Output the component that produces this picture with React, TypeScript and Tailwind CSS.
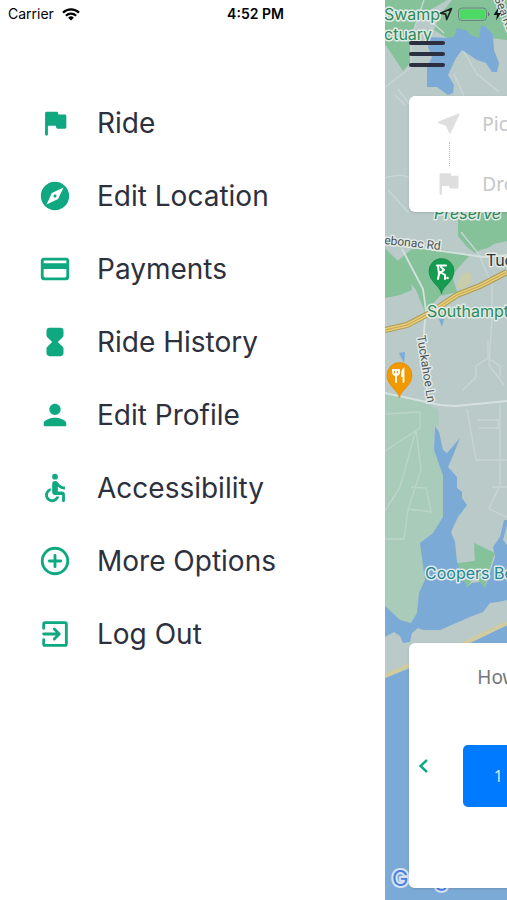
import React from 'react';

const BoxIcon = ({ children }: { children: React.ReactNode }) => (
  <svg viewBox="0 0 24 24" fill="currentColor" className="h-[34px] w-[34px] shrink-0 text-[#10a880]" aria-hidden="true">
    {children}
  </svg>
);

const FLAG_PATH =
  'M14.4 6l-.24-1.2c-.09-.46-.5-.8-.98-.8H6c-.55 0-1 .45-1 1v15c0 .55.45 1 1 1s1-.45 1-1v-6h5.6l.24 1.2c.09.47.5.8.98.8H19c.55 0 1-.45 1-1V7c0-.55-.45-1-1-1h-4.6z';

const menu = [
  { label: 'Ride', icon: <path d={FLAG_PATH} /> },
  {
    label: 'Edit Location',
    icon: (
      <path d="M12 10.9c-.61 0-1.1.49-1.1 1.1s.49 1.1 1.1 1.1c.61 0 1.1-.49 1.1-1.1s-.49-1.1-1.1-1.1zM12 2C6.48 2 2 6.48 2 12s4.48 10 10 10 10-4.48 10-10S17.52 2 12 2zm2.19 12.19L6 18l3.81-8.19L18 6l-3.81 8.19z" />
    ),
  },
  {
    label: 'Payments',
    icon: (
      <path d="M20 4H4c-1.11 0-1.99.89-1.99 2L2 18c0 1.11.89 2 2 2h16c1.11 0 2-.89 2-2V6c0-1.11-.89-2-2-2zm-1 14H5c-.55 0-1-.45-1-1v-5h16v5c0 .55-.45 1-1 1zm1-10H4V6h16v2z" />
    ),
  },
  {
    label: 'Ride History',
    icon: (
      <path d="M6 4v3.17c0 .53.21 1.04.59 1.42L10 12l-3.42 3.42c-.37.38-.58.89-.58 1.42V20c0 1.1.9 2 2 2h8c1.1 0 2-.9 2-2v-3.16c0-.53-.21-1.04-.58-1.41L14 12l3.41-3.4c.38-.38.59-.89.59-1.42V4c0-1.1-.9-2-2-2H8c-1.1 0-2 .9-2 2z" />
    ),
  },
  {
    label: 'Edit Profile',
    icon: (
      <path d="M12 12c2.21 0 4-1.79 4-4s-1.79-4-4-4-4 1.79-4 4 1.79 4 4 4zm0 2c-2.67 0-8 1.34-8 4v1c0 .55.45 1 1 1h14c.55 0 1-.45 1-1v-1c0-2.66-5.33-4-8-4z" />
    ),
  },
  {
    label: 'Accessibility',
    icon: (
      <>
        <circle cx="12" cy="4" r="2" />
        <path d="M19 13v-2c-1.54.02-3.09-.75-4.07-1.83l-1.29-1.43c-.17-.19-.38-.34-.61-.45-.01 0-.01-.01-.02-.01H13c-.35-.2-.75-.3-1.19-.26C10.76 7.11 10 8.04 10 9.09V15c0 1.1.9 2 2 2h5v4c0 .55.45 1 1 1s1-.45 1-1v-4.5c0-1.1-.9-2-2-2h-3v-3.45c1.29 1.07 3.25 1.94 5 1.95zm-6.17 5c-.41 1.16-1.52 2-2.83 2-1.66 0-3-1.34-3-3 0-1.31.84-2.41 2-2.83V12.1c-2.28.46-4 2.48-4 4.9 0 2.76 2.24 5 5 5 2.42 0 4.44-1.72 4.9-4h-2.07z" />
      </>
    ),
  },
  {
    label: 'More Options',
    icon: (
      <g fill="none" stroke="currentColor" strokeWidth="2" strokeLinecap="round">
        <circle cx="12" cy="12" r="9" />
        <path d="M12 8v8M8 12h8" />
      </g>
    ),
  },
  {
    label: 'Log Out',
    icon: (
      <g fill="none" stroke="currentColor" strokeWidth="2" strokeLinecap="round" strokeLinejoin="round">
        <path d="M4 8V5c0-.55.45-1 1-1h14c.55 0 1 .45 1 1v14c0 .55-.45 1-1 1H5c-.55 0-1-.45-1-1v-3" />
        <path d="M4 12h11M11.5 8.5L15 12l-3.5 3.5" />
      </g>
    ),
  },
];

function StatusBar() {
  return (
    <header className="absolute inset-x-0 top-0 z-20 grid h-7 grid-cols-3 items-center pl-2 pr-1 text-black">
      <div className="flex items-center gap-1 text-sm">
        <span>Carrier</span>
        <svg viewBox="0 0 18 13" className="ml-1 h-[13px] w-[18px]" aria-hidden="true">
          <g fill="none" stroke="currentColor" strokeWidth="2.2">
            <path d="M1 4.6a11.3 11.3 0 0 1 16 0" />
            <path d="M3.9 7.7a7.2 7.2 0 0 1 10.2 0" />
          </g>
          <path d="M9 12.6L6.1 9.7a4.1 4.1 0 0 1 5.8 0z" fill="currentColor" />
        </svg>
      </div>
      <div className="text-center text-sm font-semibold">4:52 PM</div>
      <div className="flex items-center justify-end gap-1">
        <svg viewBox="0 0 14 14" className="h-3.5 w-3.5" aria-hidden="true">
          <path d="M12.5 1.5L1.5 6.2l5.2 1 1 5.3z" fill="none" stroke="#1b2523" strokeWidth="1.7" strokeLinejoin="round" />
        </svg>
        <svg viewBox="0 0 46 16" className="h-4 w-[46px]" aria-hidden="true">
          <rect x="1.5" y="2" width="28" height="12.5" rx="3.5" fill="none" stroke="#68857a" />
          <rect x="3" y="3.5" width="25" height="9.5" rx="2" fill="#4cd964" />
          <path d="M31 6v4.5c2-1 2-3.5 0-4.5z" fill="#5c736d" />
          <path d="M41.5 1.5l-5 7.5h3.5l-1 5.5 5-7.5h-3.5z" fill="#101816" />
        </svg>
      </div>
    </header>
  );
}

function MapBackground() {
  return (
    <svg
      viewBox="385 0 122 900"
      preserveAspectRatio="xMinYMin slice"
      className="absolute inset-0 h-full w-full"
      aria-hidden="true"
    >
      <rect x="385" width="900" height="900" fill="#b9cac8" />

      {/* parks */}
      <g fill="#85c29a">
        <path d="M385 0H447L430 10 418 20 410 40V63L403 71 385 44Z" />
        <path d="M452 0H507V40L490 38 478 39 455 39 447 38 434 30 440 15Z" />
        <path d="M458 205h49v36l-13 3-6 4-8 2-5 3-8-6-9-11z" />
        <path d="M385 248l15 15 11 18 1 9-12 5-15 3z" />
        <path d="M395 263L412 249H440L470 255 452 275 457 292 440 296 425 312 416 290Z" />
      </g>
      <path d="M385 393L420 400 438 410 439 425 434 427 434 450 444 475V517L434 534 421 543 426 580 420 593 417 614 411 624 400 621 385 607Z" fill="#a9cbba" />
      <path d="M462 275l5-4 5 4-1 7-8 8-6-3 2-8z" fill="#c9cda9" />

      {/* side roads */}
      <g fill="none" stroke="#c9d6d4" strokeWidth="1.3">
        <path d="M424 0l-13 38v30M385 87l28-21M391 9l-6 12M398 89l16 21M425 16l19 17M463 50l14 24 22 18M454 74l10 22" />
        <path d="M385 178q18-6 26 1M388 190l21 23M395 95l10 10M461 232l17 21 14 32v34l-3 46 15 20" />
        <path d="M476 377V366L488 358 500 366V377M488 340V358M476 377L463 390" />
        <path d="M467 409l9 51h31M500 404v81l-11 24 18 8M478 420h20v8h-19M492 487h15" />
        <path d="M445 668l30-14 32-18" />
      </g>
      <path
        d="M385 242l50 8 48 7 24-2M402 249l21 40 3 22-2 20 3 62M385 393l55 12 16 1 51-5"
        fill="none"
        stroke="#d6e1df"
        strokeWidth="1.8"
      />
      <g fill="none" stroke="#bbd6c9" strokeWidth="1.3">
        <path d="M385 414l35-2v16l-35 23M416 430l5 40-13 40-4 29h-19M416 430l-16 57-15 24M411 487l15 1 5 24-22-3" />
      </g>

      {/* water */}
      <g fill="#7caad6">
        <path d="M457 28L467 31 470 35 479 38 481 25 486 27 493 35 494 50 499 63 497 72H492L486 63 477 60 462 50 456 58 448 75 454 85 453 93 448 95 437 87H427V67L432 57 428 47 430 37 447 38 454 37Z" />
        <path d="M439 319h5l-2 8zM399 353l6-1-1 11z" />
        <path d="M435 426L439 432 443 450 447 453 460 438 452 458 448 467 457 477V488L462 492V498L467 505 458 517 451 532 455 542 457 562 460 567 467 587 472 583 480 582 485 588 495 557 493 547 500 537 504 520H507V600L498 602 490 603 483 612 470 617 440 630H423L418 628 412 633 410 642 403 643 400 636 394 632 385 637V606L400 620 411 623 417 613 419 593 425 580 420 543 433 533 443 517V475L434 450Z" />
        <path d="M385 678l25-10 60-25 37-18v275h-122z" />
      </g>
      <path d="M474 543L495 553 488 573 485 588 480 582 475 577 467 587 460 575 458 563 475 561Z" fill="#85c29a" />
      <path d="M385 676l25-11 53-21 44-21" fill="none" stroke="#d1cc9d" strokeWidth="4" />
      <path d="M507 525V545L503 540Z" fill="#b9cac8" />

      {/* highway */}
      <g fill="none">
        <path d="M385 330l22-5 23-12 27-18 23-9 27-14" stroke="#a99b55" strokeWidth="6" />
        <path d="M385 330l22-5 23-12 27-18 23-9 27-14" stroke="#e8cd78" strokeWidth="4" />
        <path d="M385 330l22-5 23-12 27-18 23-9 27-14" stroke="#c1a755" strokeWidth="1" />
      </g>

      {/* place names */}
      <g
        className="font-['Inter',sans-serif]"
        stroke="#e1eae7"
        strokeWidth="3"
        strokeLinejoin="round"
        paintOrder="stroke"
        fontSize="16"
        fill="#2e8b57"
      >
        <text x="384" y="20">Swamp</text>
        <text x="384" y="40">ctuary</text>
        <text x="434" y="219" fontStyle="italic">Preserve</text>
        <text x="427" y="317">Southampton</text>
        <text x="425" y="579" fill="#23869a">Coopers Beach</text>
        <text x="486" y="266" fill="#2e3437">Tuckahoe</text>
        <g className="font-['Roboto',sans-serif]" fontSize="12" fill="#4d5557">
          <text transform="translate(384 244) rotate(6)">ebonac Rd</text>
          <text transform="translate(417 336) rotate(81)">Tuckahoe Ln</text>
          <text transform="translate(494 -2) rotate(68)">Sea Rd</text>
        </g>
      </g>

      {/* pins */}
      <path d="M441.5 294c-1-8-12.5-12-12.5-23a12.5 12.5 0 0 1 25 0c0 11-11.5 15-12.5 23z" fill="#169b50" stroke="#0f7f40" strokeWidth=".6" />
      <g fill="none" stroke="#fff" strokeWidth="2" strokeLinecap="round" strokeLinejoin="round">
        <path d="M437 265.5h9M438 266l1 8-1 5M440 272l5 3v4" />
        <path d="M441 267l3 3-4 3" />
      </g>
      <circle cx="447.5" cy="278" r="1.3" fill="#fff" />
      <path d="M399.5 398c-1-8-12.5-12-12.5-23a12.5 12.5 0 0 1 25 0c0 11-11.5 15-12.5 23z" fill="#f29900" stroke="#db8300" strokeWidth=".6" />
      <path d="M393 370h6v2a3 3 0 0 1-6 0zM396 370v12M403.5 382v-12.5q-2 2-1.5 6.5h1.5" fill="none" stroke="#fff" strokeWidth="1.8" strokeLinecap="round" />

      <text
        x="392"
        y="886"
        fontSize="22"
        className="font-['Inter',sans-serif]"
        fill="#4a80e0"
        stroke="#d7e3f2"
        strokeWidth="4"
        strokeLinejoin="round"
        paintOrder="stroke"
      >
        Google
      </text>
    </svg>
  );
}

export default function App() {
  return (
    <div className="relative flex min-h-screen overflow-hidden bg-white font-['Inter',sans-serif]">
      <StatusBar />

      <nav className="w-[76%] shrink-0 pt-[86px]">
        <ul>
          {menu.map((item) => (
            <li key={item.label}>
              <a href="#" className="flex h-[73px] items-center gap-[25px] pl-[38px] text-[28px] text-[#2d303d]">
                <BoxIcon>{item.icon}</BoxIcon>
                {item.label}
              </a>
            </li>
          ))}
        </ul>
      </nav>

      <main className="relative min-w-0 flex-1 overflow-hidden">
        <MapBackground />

        {/* the screen keeps its full width and slides out past the right edge */}
        <div className="relative flex min-h-screen w-screen flex-col px-6 pb-3 pt-10 font-['Noto_Sans',sans-serif]">
          <button type="button" aria-label="Menu" className="flex h-7 w-9 flex-col items-stretch justify-between py-px">
            <span className="h-1 rounded-full bg-[#2b2f3f]" />
            <span className="h-1 rounded-full bg-[#2b2f3f]" />
            <span className="h-1 rounded-full bg-[#2b2f3f]" />
          </button>

          <form className="relative mt-7 flex flex-col gap-1 rounded-md bg-white pl-7 shadow-sm">
            <label className="flex h-14 items-center gap-[21px]">
              <svg viewBox="0 0 24 24" className="h-6 w-6 shrink-0 text-[#dedede]" aria-label="Pickup">
                <path d="M21.6 1.5L1.5 9.6c-.7.3-.7 1.1 0 1.3l7.5 3 3.3 7.4c.3.6 1.1.6 1.3 0L22.5 2.4c.2-.6-.3-1.1-.9-.9z" fill="currentColor" />
              </svg>
              <input
                type="text"
                placeholder="Pickup Location"
                className="min-w-0 flex-1 bg-transparent text-[19px] outline-none placeholder:text-[#c6c6c6]"
              />
            </label>
            <div className="absolute left-10 top-[46px] h-6 border-l border-dotted border-[#bbbbbb]" />
            <label className="flex h-14 items-center gap-[21px]">
              <svg viewBox="3 3 19 19" className="h-6 w-6 shrink-0 text-[#dedede]" aria-label="Drop off">
                <path d={FLAG_PATH} fill="currentColor" />
              </svg>
              <input
                type="text"
                placeholder="Drop Off Location"
                className="min-w-0 flex-1 bg-transparent text-[19px] outline-none placeholder:text-[#c6c6c6]"
              />
            </label>
          </form>

          <section className="mt-auto rounded-md bg-white pb-[81px] pt-5 shadow-sm">
            <h2 className="pl-[68px] text-[19px] leading-7 text-[#74767b]">How many people are riding?</h2>
            <div className="mt-[54px] flex items-center">
              <button type="button" aria-label="Previous" className="flex h-[62px] w-[54px] items-start pl-2 pt-3 text-[#10a880]">
                <svg viewBox="0 0 14 18" className="h-[18px] w-3.5" aria-hidden="true">
                  <path d="M10 3L3.5 9l6.5 6" fill="none" stroke="currentColor" strokeWidth="2.4" />
                </svg>
              </button>
              <button type="button" className="h-[62px] w-[70px] rounded-[5px] bg-[#007aff] text-base text-[#d5e9ff]">
                1
              </button>
            </div>
          </section>
        </div>
      </main>
    </div>
  );
}
